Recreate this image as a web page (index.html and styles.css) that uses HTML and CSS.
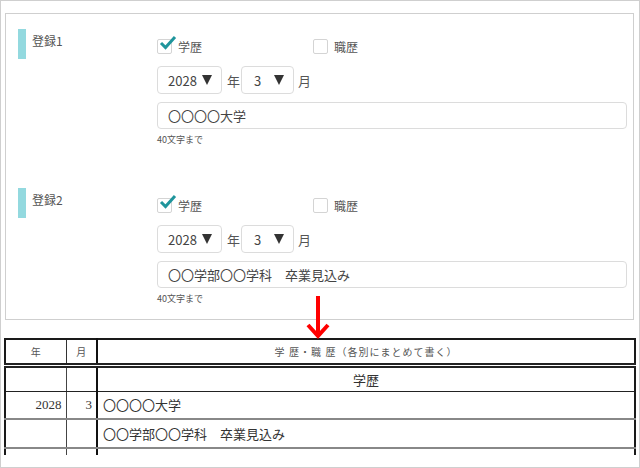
FILE: index.html
```html
<!DOCTYPE html>
<html lang="ja">
<head>
  <meta charset="UTF-8" />
  <title>学歴・職歴の入力</title>
  <link rel="stylesheet" href="styles.css">
</head>
<body>
  <div class="frame">
    <div class="panel">
      <!-- 登録1 -->
      <div class="entry">
        <div class="entry-label">登録1</div>
        <div class="entry-body">
          <div class="checks">
            <label class="check-item">
              <span class="check-box is-checked">
                <svg class="check-mark" viewBox="0 0 18 16"><path d="M2 8 L6.5 12.5 L16 2" /></svg>
              </span>
              学歴
            </label>
            <label class="check-item">
              <span class="check-box"></span>
              職歴
            </label>
          </div>
          <div class="date-row">
            <div class="select select-year"><span>2028</span><span class="caret"></span></div>
            <span class="unit unit-year">年</span>
            <div class="select select-month"><span>3</span><span class="caret"></span></div>
            <span class="unit unit-month">月</span>
          </div>
          <div class="text-input">〇〇〇〇大学</div>
          <div class="hint">40文字まで</div>
        </div>
      </div>

      <!-- 登録2 -->
      <div class="entry">
        <div class="entry-label">登録2</div>
        <div class="entry-body">
          <div class="checks">
            <label class="check-item">
              <span class="check-box is-checked">
                <svg class="check-mark" viewBox="0 0 18 16"><path d="M2 8 L6.5 12.5 L16 2" /></svg>
              </span>
              学歴
            </label>
            <label class="check-item">
              <span class="check-box"></span>
              職歴
            </label>
          </div>
          <div class="date-row">
            <div class="select select-year"><span>2028</span><span class="caret"></span></div>
            <span class="unit unit-year">年</span>
            <div class="select select-month"><span>3</span><span class="caret"></span></div>
            <span class="unit unit-month">月</span>
          </div>
          <div class="text-input">〇〇学部〇〇学科　卒業見込み</div>
          <div class="hint">40文字まで</div>
        </div>
      </div>
    </div>

    <svg class="down-arrow" viewBox="0 0 26 44" width="26" height="44">
      <path d="M13 0 V40" />
      <path d="M3 29 L13 40 L23 29" />
    </svg>

    <div class="resume-wrap">
      <table class="resume">
        <colgroup>
          <col class="col-year">
          <col class="col-month">
          <col>
        </colgroup>
        <thead>
          <tr>
            <th>年</th>
            <th>月</th>
            <th class="head-main">学 歴・職 歴（各別にまとめて書く）</th>
          </tr>
        </thead>
        <tbody>
          <tr class="row-a">
            <td></td>
            <td></td>
            <td class="section-title">学歴</td>
          </tr>
          <tr class="row-b">
            <td class="num">2028</td>
            <td class="num">3</td>
            <td>〇〇〇〇大学</td>
          </tr>
          <tr class="row-c">
            <td></td>
            <td></td>
            <td>〇〇学部〇〇学科　卒業見込み</td>
          </tr>
          <tr class="row-c">
            <td></td>
            <td></td>
            <td></td>
          </tr>
        </tbody>
      </table>
    </div>
  </div>
</body>
</html>
```

FILE: styles.css
```css
* {
  margin: 0;
  padding: 0;
  box-sizing: border-box;
}

body {
  font-family: "Noto Sans CJK JP", "Noto Sans", sans-serif;
  color: #444;
  background: #fff;
}

.frame {
  position: relative;
  width: 640px;
  height: 468px;
  border: 1px solid #cfcfcf;
  overflow: hidden;
}

/* Input panel */
.panel {
  width: 629px;
  height: 307px;
  margin: 12px 0 0 4px;
  border: 1px solid #cfcfcf;
  padding: 15px 6px 0 12px;
}

.entry {
  display: grid;
  grid-template-columns: 139px 1fr;
  height: 159px;
}

.entry-label {
  align-self: start;
  height: 30px;
  border-left: 8px solid #93d9df;
  padding: 3px 0 0 6px;
  font-size: 12px;
  line-height: 18px;
  color: #555;
}

.entry-body {
  display: flex;
  flex-direction: column;
}

.checks {
  display: flex;
  margin-top: 9px;
  height: 16px;
}

.check-item {
  display: flex;
  align-items: center;
  gap: 6px;
  width: 156px;
  font-size: 12px;
  color: #555;
}

.check-box {
  position: relative;
  width: 15px;
  height: 15px;
  border: 1px solid #d4d4d4;
  border-radius: 2px;
  background: #fff;
}

.check-mark {
  position: absolute;
  left: 1px;
  top: -5px;
  width: 18px;
  height: 16px;
  fill: none;
  stroke: #1f959c;
  stroke-width: 3;
  stroke-linejoin: miter;
}

.date-row {
  display: flex;
  align-items: center;
  margin-top: 12px;
  height: 28px;
  font-size: 13px;
}

.select {
  display: flex;
  align-items: center;
  justify-content: space-between;
  height: 28px;
  border: 1px solid #dcdcdc;
  border-radius: 4px;
  color: #444;
}

.select-year {
  width: 65px;
  padding: 0 9px 0 10px;
}

.select-month {
  width: 53px;
  padding: 0 9px 0 12px;
}

.caret {
  width: 0;
  height: 0;
  border-left: 5px solid transparent;
  border-right: 5px solid transparent;
  border-top: 10px solid #333;
}

.unit {
  color: #555;
}

.unit-year {
  margin: 0 1px 0 5px;
}

.unit-month {
  margin-left: 4px;
}

.text-input {
  margin-top: 8px;
  height: 27px;
  border: 1px solid #dcdcdc;
  border-radius: 4px;
  padding-left: 10px;
  font-size: 13px;
  line-height: 25px;
  color: #444;
}

.hint {
  margin-top: 5px;
  font-size: 9px;
  line-height: 12px;
  color: #555;
}

/* Arrow between panel and sheet */
.down-arrow {
  position: absolute;
  left: 304px;
  top: 295px;
  fill: none;
  stroke: #f00;
  stroke-width: 4;
}

/* Resume sheet */
.resume-wrap {
  width: 632px;
  height: 117px;
  margin: 18px 0 0 3px;
  overflow: hidden;
}

.resume {
  width: 632px;
  border-collapse: collapse;
  table-layout: fixed;
  border: 2px solid #1a1a1a;
  font-family: "Liberation Serif", "Noto Sans CJK JP", serif;
  color: #333;
}

.col-year {
  width: 61px;
}

.col-month {
  width: 31px;
}

.resume th {
  height: 26px;
  font-size: 10px;
  font-weight: normal;
  color: #555;
  border-left: 1px solid #333;
  border-bottom: 5px double #222;
}

.resume .head-main {
  letter-spacing: 1px;
}

.resume th:nth-child(3),
.resume td:nth-child(3) {
  border-left: 2px solid #111;
}

.resume td {
  font-size: 13px;
  border-left: 1px solid #444;
  border-bottom: 1px solid #555;
  padding: 0 5px;
}

.resume .num {
  text-align: right;
  padding-right: 4px;
}

.row-a td {
  height: 26px;
  border-bottom-color: #222;
}

.row-b td {
  height: 28px;
  border-bottom: 2px solid #888;
}

.row-c td {
  height: 29px;
  border-bottom: 2px solid #888;
}

.section-title {
  text-align: center;
}
```
